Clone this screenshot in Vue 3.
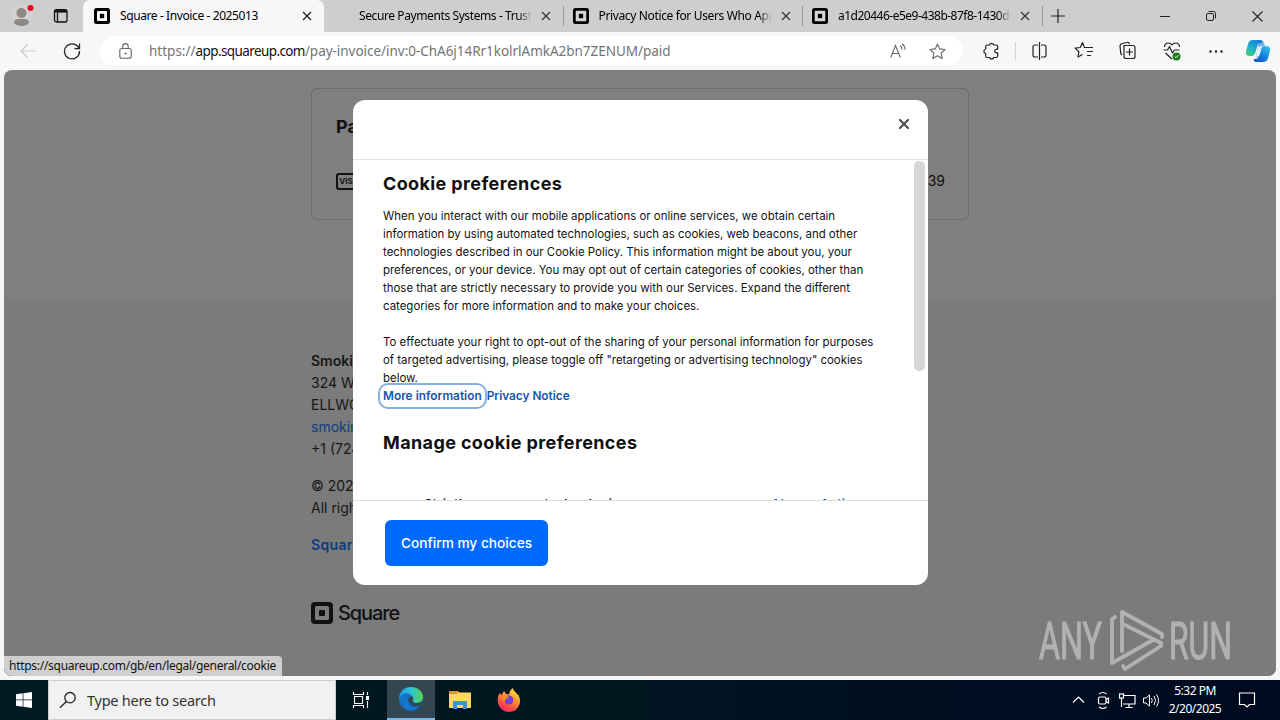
<script setup>
const tabs = [
  { title: 'Secure Payments Systems - Trust', icon: false, cls: 't2' },
  { title: 'Privacy Notice for Users Who App', icon: true, cls: 't3' },
  { title: 'a1d20446-e5e9-438b-87f8-1430d5', icon: true, cls: 't4' },
]
const paragraphs = [
  [
    'When you interact with our mobile applications or online services, we obtain certain',
    'information by using automated technologies, such as cookies, web beacons, and other',
    'technologies described in our Cookie Policy. This information might be about you, your',
    'preferences, or your device. You may opt out of certain categories of cookies, other than',
    'those that are strictly necessary to provide you with our Services. Expand the different',
    'categories for more information and to make your choices.',
  ],
  [
    'To effectuate your right to opt-out of the sharing of your personal information for purposes',
    'of targeted advertising, please toggle off "retargeting or advertising technology" cookies',
    'below.',
  ],
]
</script>

<template>
  <div class="screen">
    <header class="tabstrip">
      <div class="profile">
        <svg width="24" height="28" viewBox="0 0 24 28">
          <circle cx="11" cy="15" r="11" fill="#d3d1d0" />
          <circle cx="10.500" cy="13" r="5" fill="#8d8987" />
          <path d="M3 23c0-3 2-4 4-4h7c2 0 4 1 4 4-3 4-12 4-15 0z" fill="#8d8987" />
          <circle cx="19.500" cy="8" r="3" fill="#e00b1c" />
        </svg>
      </div>
      <svg class="wsicon" width="16" height="16" viewBox="0 0 16 16" fill="none" stroke="#111" stroke-width="1.300">
        <rect x="1.500" y="1.700" width="12.500" height="12.300" rx="2" /><path d="M2 3.300h12" stroke-width="2.500" /><path d="M4.500 4v10" />
      </svg>
      <div class="tab active">
        <svg class="fav" width="16" height="16" viewBox="0 0 16 16"><rect width="16" height="16" rx="2.500" /><rect x="3" y="3" width="10" height="10" rx="1" fill="#fff" /><rect x="5.800" y="5.800" width="4.400" height="4.400" /></svg>
        <span class="title t1">Square - Invoice - 2025013</span>
        <svg class="x" width="10" height="10" viewBox="0 0 10 10"><path d="M1 1l8 8M9 1L1 9" stroke="#222" stroke-width="1.300" /></svg>
      </div>
      <div v-for="t in tabs" :key="t.title" class="tab idle">
        <svg v-if="t.icon" class="fav" width="16" height="16" viewBox="0 0 16 16"><rect width="16" height="16" rx="2.500" /><rect x="2.700" y="2.700" width="10.600" height="10.600" rx="1" fill="#d6d6d6" /><rect x="5.800" y="5.800" width="4.400" height="4.400" /></svg>
        <span v-else class="fav"></span>
        <span class="title faded" :class="t.cls">{{ t.title }}</span>
        <svg class="x" width="10" height="10" viewBox="0 0 10 10"><path d="M1 1l8 8M9 1L1 9" stroke="#333" stroke-width="1.200" /></svg>
      </div>
      <svg class="plus" width="14" height="14" viewBox="0 0 14 14"><path d="M7 0v14M0 7h14" stroke="#222" stroke-width="1.200" /></svg>
      <div class="wincontrols">
        <svg width="10" height="10" viewBox="0 0 10 10"><path d="M0 5.500h10" stroke="#222" /></svg>
        <svg width="10" height="10" viewBox="0 0 10 10" fill="none" stroke="#222"><rect x=".5" y="2.500" width="7" height="7" rx="1.500" /><path d="M2.500 .5h5a2 2 0 0 1 2 2v5" /></svg>
        <svg width="11" height="11" viewBox="0 0 11 11"><path d="M.5 .5l10 10M10.500 .5l-10 10" stroke="#222" stroke-width="1.100" /></svg>
      </div>
    </header>

    <nav class="toolbar">
      <svg class="back" width="16" height="14" viewBox="0 0 16 14" fill="none" stroke="#c9c9c9" stroke-width="1.200"><path d="M16 7H1M7.500 .5L1 7l6.500 6.500" /></svg>
      <svg class="reload" width="18" height="18" viewBox="0 0 18 18" fill="none" stroke="#222" stroke-width="1.300"><path d="M16.200 7.200A7.500 7.500 0 1 0 16.500 9M16.500 1.500v5.200h-5" /></svg>
      <div class="address">
        <svg class="lock" width="13" height="17" viewBox="0 0 13 17" fill="none" stroke="#666" stroke-width="1.100"><rect x=".8" y="5.500" width="11.400" height="9.800" rx="2" /><path d="M3.800 5.500V3.300a2.700 2.700 0 0 1 5.400 0v2.200" /><circle cx="6.500" cy="10.500" r=".5" fill="#666" /></svg>
        <span class="url"><span>https://</span><b>app.squareup.com</b><span class="u3">/pay-invoice/inv:0-ChA6j14Rr1kolrlAmkA2bn7ZENUM/paid</span></span>
        <svg class="aloud" width="17" height="16" viewBox="0 0 17 16" fill="none" stroke="#666" stroke-width="1.100"><path d="M.8 14.500L5.500 2.500l4.800 12M2.500 10.500h6.200M10 2.500c1.500 1 2 2.200 2 4M12.200 .8c2 1.500 2.800 3.500 2.800 6" /></svg>
        <svg class="star" width="17" height="17" viewBox="0 0 17 17" fill="none" stroke="#666" stroke-width="1.100" stroke-linejoin="round"><path d="M8.500 1l2.200 4.900 5.300.6-3.900 3.600 1 5.300-4.600-2.600-4.600 2.600 1-5.300L1 6.500l5.300-.6z" /></svg>
      </div>
      <svg class="tools" width="270" height="30" viewBox="0 0 270 30" fill="none" stroke="#222" stroke-width="1.200" stroke-linejoin="round">
        <path transform="translate(.7 0)" d="M11.500 9h2.300a2.200 2.200 0 0 1 4.200 0h2.500q1.500 0 1.500 1.500v2.600h-1a1.900 1.900 0 0 0 0 3.800h1V20q0 1.500-1.500 1.500h-2.500a2.200 2.200 0 0 1-4.200 0h-2.300q-1.500 0-1.500-1.500v-2.500a2.300 2.300 0 0 1 0-4.500V10.500q0-1.500 1.500-1.500z" />
        <path d="M40.500 6v18" stroke="#d2d2d2" />
        <path d="M63 9h-3q-2 0-2 2v8q0 2 2 2h3M66 9h3q2 0 2 2v8q0 2-2 2h-3M64.500 6v18" />
        <g transform="translate(-2 -.5)"><path d="M116 12h-4.500L109.500 7l-2.200 5-5.300.6 3.900 3.600-1 5.300 4.600-2.600M114 12h6M114 16h6M114 20h4" /></g>
        <g transform="translate(1 0)"><path d="M148 9.500h9q2 0 2 2v9q0 2-2 2h-7q-2 0-2-2zM153.500 12.500v7M150 16h7" /><path d="M146 19q-1-1-1.300-2L144 10q0-2 2-2.500l5-1q2-.5 2.500 1.500" /></g>
        <g transform="translate(8.500 0)">
          <path d="M180 14h4l2-3.500 3 6.500 2-3h5M181 11q0-4 4-4 2 0 3.500 2 1.500-2 3.500-2 4 0 4 4M182 17l6.500 6" />
          <circle cx="193" cy="20.500" r="4" fill="#138018" stroke="none" /><path d="M191.200 20.500l1.300 1.300 2.500-2.700" stroke="#fff" stroke-width="1" />
        </g>
        <g fill="#222" stroke="none"><circle cx="235.500" cy="15.500" r="1.200" /><circle cx="241" cy="15.500" r="1.200" /><circle cx="246.500" cy="15.500" r="1.200" /></g>
      </svg>
      <svg class="copilot" width="24" height="22" viewBox="0 0 24 22">
        <defs>
          <linearGradient id="cpa" x1="0.700" y1="0" x2="0.100" y2="1"><stop offset="0" stop-color="#1685d8" /><stop offset=".5" stop-color="#1bb1c9" /><stop offset="1" stop-color="#45cf7a" /></linearGradient>
          <linearGradient id="cpb" x1="0.800" y1="0" x2="0.200" y2="1"><stop offset="0" stop-color="#34c4ee" /><stop offset=".5" stop-color="#1585dd" /><stop offset="1" stop-color="#1456c8" /></linearGradient>
        </defs>
        <path d="M7 0h7q3 0 2 3h-2q-2 0-3 4L9.500 12q-1 4-4 4H3q-4 0-3-5L2 4q1-4 5-4z" fill="url(#cpa)" />
        <path d="M17 22h-7q-3 0-2-3h2q2 0 3-4l1.500-5q1-4 4-4H21q4 0 3 5l-2 7q-1 4-5 4z" fill="url(#cpb)" />
        <path d="M11 0h4q2 0 3 3l1 3q-3-1-4.500 3L13 14q-1 4-3 4 0-2 1-6l1-5q1-4-1-7z" fill="#176fd0" opacity=".55" />
        <path d="M12 7l4-1-2 8q-1 3-5 3 2-1 2-6z" fill="#dff4fb" />
      </svg>
    </nav>

    <main class="page">
      <section class="receipt">
        <div class="payment">
          <div class="payhead">Pay</div>
          <div class="payrow">
            <span class="visa">VISA</span>
            <span class="amount">39</span>
          </div>
        </div>
      </section>
      <footer class="pagefoot">
        <p class="strong">Smokin</p>
        <p>324 W</p>
        <p>ELLWO</p>
        <p class="link">smokin</p>
        <p>+1 (724)</p>
        <p class="gap">© 2025</p>
        <p>All right</p>
        <p class="link strong wide gap2">Squar</p>
        <div class="brand">
          <svg width="22" height="22" viewBox="0 0 22 22"><rect width="22" height="22" rx="4" fill="#111" /><rect x="4" y="4" width="14" height="14" rx="1.500" fill="#7b7b7b" /><rect x="8" y="8" width="6" height="6" rx=".8" fill="#111" /></svg>
          <span>Square</span>
        </div>
      </footer>
      <svg class="watermark" width="200" height="64" viewBox="0 0 200 64">
        <g fill="none" stroke="#b9b9b9" stroke-width="3.800" stroke-linejoin="round" stroke-linecap="round">
          <path d="M77 8l-3 2v44l41-23" />
          <path d="M84 42V3l40 22v3" />
          <path d="M87 16l36 18v3L87 60l-2-3" />
        </g>
        <g class="wmtext"><text x="1" y="50" textLength="63" lengthAdjust="spacingAndGlyphs">ANY</text><text x="131" y="50" textLength="63" lengthAdjust="spacingAndGlyphs">RUN</text></g>
      </svg>
      <div class="status">https://squareup.com/gb/en/legal/general/cookie</div>

      <div class="modal">
        <div class="mhead">
          <svg width="12" height="12" viewBox="0 0 12 12"><path d="M2 2l8 8M10 2l-8 8" stroke="#4d4d4d" stroke-width="2.200" stroke-linecap="round" /></svg>
        </div>
        <div class="mbody">
          <h2 class="h1">Cookie preferences</h2>
          <div v-for="(p, i) in paragraphs" :key="i" class="para">
            <div v-for="l in p" :key="l">{{ l }}</div>
          </div>
          <div class="links"><a class="focus">More information</a><a>Privacy Notice</a></div>
          <h2 class="h2">Manage cookie preferences</h2>
          <div class="group"><svg width="10" height="10" viewBox="0 0 10 10"><path d="M5 1v9M0 5.500h10" stroke="#222" stroke-width="1.500" /></svg><span class="gname">Strictly necessary technologies</span><span class="active-label">Always Active</span></div>
          <div class="thumb"></div>
        </div>
        <div class="mfoot"><button>Confirm my choices</button></div>
      </div>
    </main>

    <div class="taskbar">
      <div class="start"><svg width="16" height="16" viewBox="0 0 16 16" fill="#fff"><path d="M0 2.200L6.700 1.300v6.300H0zM7.400 1.200L16 0v7.600H7.400zM0 8.300h6.700v6.400L0 13.800zM7.400 8.300H16V16l-8.600-1.200z" /></svg></div>
      <div class="search"><svg width="18" height="18" viewBox="0 0 18 18" fill="none" stroke="#222" stroke-width="1.300"><circle cx="11" cy="6.700" r="5.200" /><path d="M7.300 10.500L1 16.800" /></svg><span>Type here to search</span></div>
      <div class="cell"><svg width="18" height="18" viewBox="0 0 18 18" fill="none" stroke="#fff" stroke-width="1.100"><path d="M1.500 1v2.500h10V1M1.500 17v-2.500h10V17M2.500 5.500h8v7h-8zM15.500 1v3M15.500 10v7" /><rect x="14.500" y="5.500" width="2" height="3" fill="#fff" /></svg></div>
      <div class="cell on">
        <svg width="24" height="24" viewBox="0 0 24 24">
          <defs><linearGradient id="ea"><stop offset="0" stop-color="#1d9ce0" /><stop offset=".5" stop-color="#2bc3d2" /><stop offset="1" stop-color="#5ad651" /></linearGradient><linearGradient id="eb" x1="0" y1="0" x2="1" y2="1"><stop offset="0" stop-color="#1682d6" /><stop offset="1" stop-color="#0b55a4" /></linearGradient></defs>
          <circle cx="12" cy="12" r="12" fill="url(#eb)" />
          <path d="M0 11C1 3 7 0 12 0c7 0 12 5 12 10 0 4-3 6-6 6-3 0-5-1-4.500-2.500 1-1 1-2.500 0-4C10 5 3 5 0 11z" fill="url(#ea)" />
          <path d="M9 12.500q1-3 4-3c2 1.500 1 3 .5 4 0 2 3 3 5 2.500l4.500-1.500q-.5 3-3 5-8 1-11-7z" fill="#33474f" />
          <path d="M8.500 12c-1 6 5 10 12 7-4 6-13 6-16 0-1-4 1-6 4-7z" fill="#1976cf" />
        </svg>
      </div>
      <div class="cell"><svg width="22" height="20" viewBox="0 0 22 20"><path d="M0 1h9l2 2h11v4H0z" fill="#e2952b" /><path d="M0 4h7l2-1.500h13V18H0z" fill="#ffd767" /><path d="M4 19v-7q0-1 1-1h12q1 0 1 1v7h-4v-4H8v4z" fill="#3d94cf" /></svg></div>
      <div class="cell"><svg width="24" height="24" viewBox="0 0 24 24">
        <defs><linearGradient id="ff" x1=".8" y1="0" x2=".3" y2="1"><stop offset="0" stop-color="#fff044" /><stop offset=".4" stop-color="#ff9a2c" /><stop offset=".75" stop-color="#ff4b3e" /><stop offset="1" stop-color="#ef2477" /></linearGradient></defs>
        <path d="M2.500 5l2 2 2.500-4 2 3 3 .5Q13 2 15.500 0q1 3 4 5l.5 2 1-1q2.500 5 2 8c-1 6-5 10-11 10S1 19 .7 13Q.7 8 2.500 5z" fill="url(#ff)" />
        <circle cx="11.800" cy="12" r="4.600" fill="#7542d6" /><path d="M6 8q4-2 6 1.500l-3 1.500q-2 1-1 3-3-1-2-6z" fill="#ff8a2a" />
      </svg></div>
      <div class="tray">
        <svg width="88" height="20" viewBox="-1 0 88 20" fill="none" stroke="#fff" stroke-width="1.200">
          <path d="M1 12.500l5.500-5.500 5.500 5.500" />
          <rect x="26.500" y="7" width="7.500" height="7" rx="1.500" /><path d="M34 9.500l2.500-1.500v5L34 11.500M27 4q4-3 7.500 0M27 17q4 3 7.500 0" />
          <path d="M52 5.500h11v8.500H51M57 14v3M53.500 17.500h7" /><rect x="47.500" y="4" width="4" height="4" /><path d="M49.500 8v9" />
          <path d="M71.500 8H74l3.500-3v11L74 13h-2.500zM79.500 8q1.500 2.500 0 5M82 6q3 4.500 0 9M84.500 4.500q4 6 0 12" stroke-width="1" />
        </svg>
        <div class="clock"><div>5:32 PM</div><div class="date">2/20/2025</div></div>
        <svg width="18" height="18" viewBox="0 0 18 18" fill="none" stroke="#fff" stroke-width="1.200"><path d="M1.500 2h15v11.500H11.500l-2.500 2.500-2.500-2.500h-5z" /></svg>
      </div>
    </div>
  </div>
</template>

<style>
html, body { overflow: hidden; }
</style>
<style scoped>
.screen { width: 1280px; height: 720px; overflow: hidden; background: #f6f6f6; display: flex; flex-direction: column; font-family: "Noto Sans", sans-serif; color: #111; position: relative; }
svg { display: block; flex: none; }
p, h2 { margin: 0; }
.tabstrip { height: 32px; background: #cecece; display: flex; align-items: center; flex: none; }
.profile { width: 53px; padding-left: 11px; box-sizing: border-box; height: 32px; flex: none; }
.wsicon { margin-right: 14px; }
.tab { height: 32px; width: 240px; box-sizing: border-box; display: flex; align-items: center; flex: none; padding-left: 9px; }
.tab.active { background: #f7f7f7; border-radius: 7px 7px 0 0; padding-left: 11px; width: 241px; }
.tab.idle { border-right: 1px solid #999; height: 20px; width: 239.500px; }
.fav { width: 16px; height: 16px; flex: none; margin-right: 10px; }
.title { font-size: 12px; white-space: nowrap; overflow: hidden; width: 178px; flex: none; line-height: 20px; color: #000; }
.t1 { letter-spacing: -0.4px; }
.t2 { letter-spacing: -0.4px; }
.t3 { letter-spacing: -0.36px; }
.t4 { letter-spacing: -0.5px; }
.faded { mask-image: linear-gradient(90deg, #000 90%, transparent 97%); }
.x { margin-left: 4px; }
.plus { margin-left: 8px; }
.wincontrols { display: flex; align-items: center; gap: 36px; margin-left: auto; margin-right: 17px; }
.toolbar { height: 38px; flex: none; display: flex; align-items: center; background: #f7f7f7; }
.back { margin-left: 20px; }
.reload { margin-left: 27px; }
.address { margin-left: 19px; width: 863px; height: 30px; border-radius: 15px; background: #fff; display: flex; align-items: center; flex: none; }
.lock { margin-left: 19px; }
.url { margin-left: 17px; font-size: 13.500px; color: #747474; width: 740px; white-space: nowrap; }
.url b { font-weight: 400; color: #111; letter-spacing: -.6px; }
.u3 { letter-spacing: -.03px; }
.star { margin-left: 22px; }
.aloud { margin-left: 1px; }
.tools { margin-left: 12px; }
.copilot { margin-left: 1px; }
.page { height: 606px; margin: 0 4px; border-radius: 8px; background: #7f7f7f; flex: none; overflow: hidden; position: relative; }
.receipt { height: 230px; padding: 18px 307px 0; box-sizing: border-box; }
.payment { height: 132px; box-sizing: border-box; border: 1px solid #6c6c6c; border-radius: 6px; padding: 25px 23px 25px 24px; }
.payhead { font: 700 18px/26px Inter, sans-serif; }
.payrow { display: flex; justify-content: space-between; align-items: center; margin-top: 29px; font: 14px/24px Inter, sans-serif; }
.visa { border: 2px solid #111; border-radius: 3px; height: 17px; width: 26px; box-sizing: border-box; font: 700 8px/13px Inter, sans-serif; text-align: center; }
.pagefoot { background: #7b7b7b; height: 376px; box-sizing: border-box; padding: 50px 307px 0; font: 14px/22px Inter, sans-serif; color: #161616; }
.strong { font-weight: 600; }
.wide { letter-spacing: .35px; }
.link { color: #0d3c80; }
.gap, .gap2 { margin-top: 15px; }
.brand { display: flex; align-items: center; gap: 5px; margin-top: 45px; font: 500 20px/24px Inter, sans-serif; letter-spacing: -1.100px; color: #111; }
.watermark { position: absolute; left: 1034px; top: 539px; opacity: .9; }
.wmtext { font: 51px Roboto, sans-serif; fill: #b7b7b7; stroke: #b7b7b7; stroke-width: 1.200px; }
.status { position: absolute; left: 0; bottom: 0; width: 278px; height: 20px; box-sizing: border-box; background: #cfcfcf; border-radius: 0 4px 0 8px; font-size: 12px; line-height: 20px; padding-left: 5px; white-space: nowrap; letter-spacing: -.28px; }
.modal { position: absolute; left: 349px; top: 30px; width: 575px; height: 485px; border-radius: 12px; background: #fff; overflow: hidden; display: flex; flex-direction: column; font-family: Inter, sans-serif; }
.mhead { height: 41px; border-bottom: 1px solid #e3e3e3; display: flex; justify-content: flex-end; padding: 18px 18px 0 0; flex: none; }
.mbody { height: 340px; flex: none; overflow: hidden; position: relative; padding-left: 30px; box-sizing: border-box; }
.h1, .h2 { font-weight: 700; font-size: 18px; line-height: 24px; white-space: nowrap; letter-spacing: .38px; }
.h1 { margin-top: 12px; margin-bottom: 11px; }
.para { font-size: 11.450px; line-height: 18px; white-space: nowrap; margin-bottom: 18px; }
.para + .para { margin-bottom: 0; }
.links { display: flex; height: 18px; align-items: center; font-size: 11.800px; line-height: 16px; font-weight: 600; color: #1455ae; gap: 5px; }
.focus { outline: 2px solid #86aee8; outline-offset: 3px; border-radius: 5px; letter-spacing: .04px; }
.h2 { margin-top: 26px; }
.group { display: flex; margin-top: 39px; padding-left: 13px; font-size: 13px; font-weight: 600; line-height: 20px; white-space: nowrap; align-items: center; }
.gname { margin-left: 18px; width: 347px; letter-spacing: .15px; }
.active-label { color: #0b5bc4; }
.thumb { position: absolute; right: 3px; top: 1px; width: 11px; height: 210px; border-radius: 5px; background: #d6d6d6; }
.mfoot { flex: 1; border-top: 1px solid #dedede; padding: 19px 32px; }
button { border: 0; border-radius: 6px; background: #006aff; color: #fff; width: 163px; height: 46px; font: 500 13.700px Inter, sans-serif; padding: 0; display: block; white-space: nowrap; }
.taskbar { margin-top: 4px; height: 40px; flex: none; display: flex; background: linear-gradient(90deg, #001923 0, #001621 50%, #000d20 75%, #000a1f 100%); color: #fff; }
.start { width: 48px; display: grid; place-items: center; }
.search { width: 288px; box-sizing: border-box; background: #f1f1f1; border: 1px solid #ccc; display: flex; align-items: center; padding-left: 10px; color: #333; }
.search span { margin-left: 10px; font-size: 14.500px; letter-spacing: -.25px; white-space: nowrap; }
.cell { width: 49px; display: grid; place-items: center; box-sizing: border-box; }
.cell.on { width: 48px; background: #34474f; border-bottom: 2px solid #76b9ed; margin-left: 2px; }
.tray { margin-left: auto; display: flex; align-items: center; padding-right: 24px; }
.clock { width: 79px; box-sizing: border-box; padding-right: 7px; text-align: center; font-size: 12px; line-height: 18px; letter-spacing: -.5px; }
</style>
